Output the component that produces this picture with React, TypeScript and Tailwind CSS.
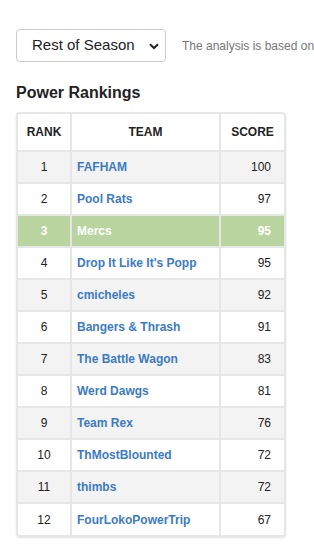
import React from 'react';

const rows = [
  { rank: 1, team: 'FAFHAM', score: 100 },
  { rank: 2, team: 'Pool Rats', score: 97 },
  { rank: 3, team: 'Mercs', score: 95, mine: true },
  { rank: 4, team: "Drop It Like It's Popp", score: 95 },
  { rank: 5, team: 'cmicheles', score: 92 },
  { rank: 6, team: 'Bangers & Thrash', score: 91 },
  { rank: 7, team: 'The Battle Wagon', score: 83 },
  { rank: 8, team: 'Werd Dawgs', score: 81 },
  { rank: 9, team: 'Team Rex', score: 76 },
  { rank: 10, team: 'ThMostBlounted', score: 72 },
  { rank: 11, team: 'thimbs', score: 72 },
  { rank: 12, team: 'FourLokoPowerTrip', score: 67 },
];

export default function App() {
  return (
    <div className="w-[314px] h-[552px] overflow-hidden bg-white font-['Liberation_Sans',Arial,sans-serif] text-[#222]">
      {/* Filtro */}
      <div className="flex items-center pl-4 pt-[29px] whitespace-nowrap">
        <div className="relative shrink-0 w-[150px] h-[33px] border border-[#ccc] rounded-[4px] flex items-center pl-[15px] text-[15px] text-[#222]">
          Rest of Season
          <svg className="absolute right-[6px] top-[13px]" width="10" height="7" viewBox="0 0 10 7">
            <path d="M1 1.2 L5 5 L9 1.2" fill="none" stroke="#222" strokeWidth="2" />
          </svg>
        </div>
        <span className="ml-4 text-[12px] text-[#777]">The analysis is based on</span>
      </div>

      <h2 className="pl-4 mt-[21px] text-[16px] font-bold leading-[20px]">Power Rankings</h2>

      {/* Tabla */}
      <div className="ml-4 mt-[9px] w-[270px] rounded-[4px] border-2 border-[#e6e6e6] shadow-[0_1px_2px_rgba(0,0,0,0.12)] overflow-hidden">
        <table className="w-full border-collapse text-[12px] table-fixed">
          <thead>
            <tr className="h-[37px]">
              <th className="w-[53px] border-r-2 border-b-2 border-[#e6e6e6] font-bold text-center">RANK</th>
              <th className="border-r-2 border-b-2 border-[#e6e6e6] font-bold text-center">TEAM</th>
              <th className="w-[64px] border-b-2 border-[#e6e6e6] font-bold text-center">SCORE</th>
            </tr>
          </thead>
          <tbody>
            {rows.map((r, i) => {
              const bg = r.mine ? 'bg-[#bad4a0]' : i % 2 === 0 ? 'bg-[#f3f3f3]' : 'bg-white';
              const last = i === rows.length - 1;
              return (
                <tr key={r.rank} className={`h-[32px] ${bg}`}>
                  <td className={`border-r-2 ${last ? '' : 'border-b-2'} border-[#e6e6e6] text-center ${r.mine ? 'text-white font-bold' : 'text-[#222]'}`}>
                    {r.rank}
                  </td>
                  <td className={`border-r-2 ${last ? '' : 'border-b-2'} border-[#e6e6e6] pl-[5px] font-bold truncate ${r.mine ? 'text-white' : 'text-[#3b7bc4]'}`}>
                    {r.team}
                  </td>
                  <td className={`${last ? '' : 'border-b-2'} border-[#e6e6e6] text-right pr-[13px] ${r.mine ? 'text-white font-bold' : 'text-[#222]'}`}>
                    {r.score}
                  </td>
                </tr>
              );
            })}
          </tbody>
        </table>
      </div>
    </div>
  );
}
